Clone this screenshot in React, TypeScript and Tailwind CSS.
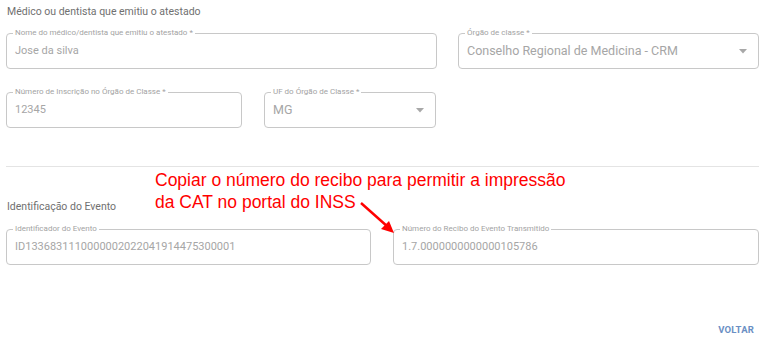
import React from "react";

function Field({ label, value, width, select }: { label: string; value: string; width: string; select?: boolean }) {
  return (
    <div className={`relative ${width} h-[36px] rounded-[4px] border border-[#c8c8c8] flex items-center pl-[8px] pr-[10px]`}>
      <span className="absolute left-[6px] top-[-6px] bg-white px-[2px] text-[8px] leading-[10px] text-[#a3a3a3]">{label}</span>
      <span className={`flex-1 ${select ? "text-[12.5px]" : "text-[11px]"} text-[#a6a6a6] pt-[1px]`}>{value}</span>
      {select && (
        <svg width="8" height="5" viewBox="0 0 8 5" className="mr-[1px]">
          <path d="M0 0 L8 0 L4 4.5 Z" fill="#a8a8a8" />
        </svg>
      )}
    </div>
  );
}

export default function App() {
  return (
    <div className="relative w-[768px] h-[353px] bg-white overflow-hidden" style={{ fontFamily: "Roboto, 'Noto Sans', sans-serif" }}>
      <div className="pl-[6px] pr-[9px]">
        <div className="pt-[4px] pl-[1px] text-[10.5px] leading-[16px] text-[#707070]">Médico ou dentista que emitiu o atestado</div>
        <div className="mt-[13px] flex gap-[21px]">
          <Field label="Nome do médico/dentista que emitiu o atestado *" value="Jose da silva" width="w-[431px]" />
          <Field label="Órgão de classe *" value="Conselho Regional de Medicina - CRM" width="w-[301px]" select />
        </div>
        <div className="mt-[23px] flex gap-[22px]">
          <Field label="Número de Inscrição no Órgão de Classe *" value="12345" width="w-[236px]" />
          <Field label="UF do Órgão de Classe *" value="MG" width="w-[172px]" select />
        </div>
        <div className="mt-[38px] h-px bg-[#e4e4e4]" />
        <div className="mt-[32px] pl-[1px] text-[10.5px] leading-[16px] text-[#707070]">Identificação do Evento</div>
        <div className="mt-[14px] flex gap-[22px]">
          <Field label="Identificador do Evento" value="ID1336831110000002022041914475300001" width="w-[365px]" />
          <Field label="Número do Recibo do Evento Transmitido" value="1.7.0000000000000105786" width="w-[366px]" />
        </div>
        <div className="mt-[58px] flex justify-end pr-[5px]">
          <span className="text-[9.5px] font-bold tracking-[0.2px] text-[#6b8fc4]">VOLTAR</span>
        </div>
      </div>
      <div
        className="absolute left-[155px] top-[169px] text-[17.5px] leading-[22px] text-[#ff0000]"
        style={{ fontFamily: "'Liberation Sans', Arial, sans-serif" }}
      >
        Copiar o número do recibo para permitir a impressão
        <br />
        da CAT no portal do INSS
      </div>
      <svg className="absolute left-0 top-0" width="768" height="353">
        <line x1="361" y1="203" x2="388" y2="227" stroke="#ff0000" strokeWidth="2.5" />
        <path d="M394 233 L381 229 L389 221 Z" fill="#ff0000" />
      </svg>
    </div>
  );
}
